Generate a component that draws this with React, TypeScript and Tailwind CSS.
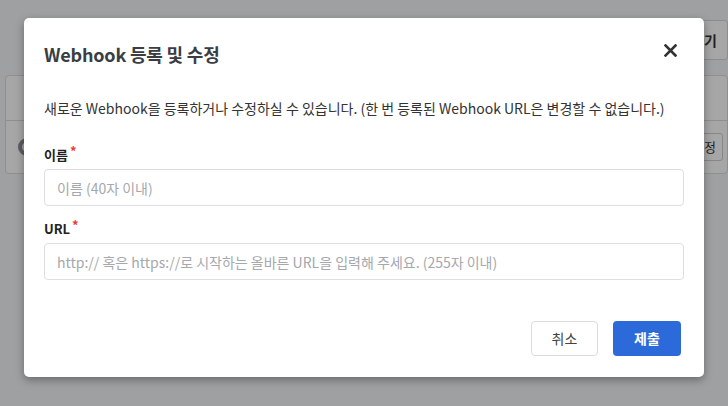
import React from "react";

export default function App() {
  const font = { fontFamily: '"Noto Sans CJK KR", "Noto Sans", sans-serif' };
  return (
    <div className="relative w-[728px] h-[406px] overflow-hidden bg-[#f5f6f8]" style={font}>
      {/* background page */}
      <div className="flex flex-col pl-[5px] pt-[20px]">
        <div className="flex justify-end">
          <div className="h-[40px] w-[110px] border border-[#d8d8d8] rounded-[3px] bg-white flex items-center justify-end pr-[10px] text-[14px] font-bold text-[#333]">
            추가하기
          </div>
        </div>
        <div className="mt-[15px] border border-[#dcdcdc] rounded-[4px] bg-white">
          <div className="h-[45px] border-b border-[#dcdcdc]" />
          <div className="h-[52px] flex items-center justify-between pl-[12px] pr-[4px]">
            <div className="w-[18px] h-[18px] rounded-full border-[4px] border-[#8a9099]" />
            <div className="h-[28px] px-[6px] border border-[#d0d0d0] rounded-[3px] flex items-center text-[13px] text-[#333]">
              설정
            </div>
          </div>
        </div>
      </div>

      {/* overlay */}
      <div className="absolute inset-0 bg-black/[0.35]" />

      {/* modal */}
      <div className="absolute left-[24px] top-[18px] w-[680px] h-[359px] bg-white rounded-[5px] shadow-[0_3px_8px_rgba(0,0,0,0.35)] flex flex-col px-[20px]">
        <div className="flex items-center justify-between h-[70px] pt-[2px]">
          <h2 className="text-[18px] font-bold text-[#3a3d42] tracking-[-0.2px]">Webhook 등록 및 수정</h2>
          <button className="w-[24px] h-[24px] flex items-center justify-center mr-[2px] -mt-[8px]">
            <svg width="13" height="13" viewBox="0 0 13 13">
              <path d="M1.5 1.5 L11.5 11.5 M11.5 1.5 L1.5 11.5" stroke="#333" strokeWidth="2.6" strokeLinecap="square" />
            </svg>
          </button>
        </div>
        <p className="mt-[10px] text-[14px] text-[#333] leading-[20px]">
          새로운 Webhook을 등록하거나 수정하실 수 있습니다. (한 번 등록된 Webhook URL은 변경할 수 없습니다.)
        </p>
        <label className="mt-[28px] flex items-start text-[13px] font-bold text-[#222] leading-[18px]">
          이름<span className="text-[#ec3a3a] text-[13px] ml-[2px] -mt-[4px]">*</span>
        </label>
        <input
          className="mt-[5px] h-[37px] w-full border border-[#dcdee2] rounded-[4px] px-[12px] text-[14px] placeholder:text-[#a5a8ad] outline-none"
          placeholder="이름 (40자 이내)"
        />
        <label className="mt-[14px] flex items-start text-[13px] font-bold text-[#222] leading-[18px]">
          URL<span className="text-[#ec3a3a] text-[13px] ml-[2px] -mt-[4px]">*</span>
        </label>
        <input
          className="mt-[5px] h-[37px] w-full border border-[#dcdee2] rounded-[4px] px-[12px] text-[14px] placeholder:text-[#a5a8ad] outline-none"
          placeholder="http:// 혹은 https://로 시작하는 올바른 URL을 입력해 주세요. (255자 이내)"
        />
        <div className="mt-[41px] flex justify-end gap-[15px] pr-[3px]">
          <button className="w-[67px] h-[35px] border border-[#dcdcdc] rounded-[4px] bg-white text-[14px] text-[#444]">
            취소
          </button>
          <button className="w-[68px] h-[35px] rounded-[4px] bg-[#2d6ad9] text-[14px] font-bold text-white">
            제출
          </button>
        </div>
      </div>
    </div>
  );
}
